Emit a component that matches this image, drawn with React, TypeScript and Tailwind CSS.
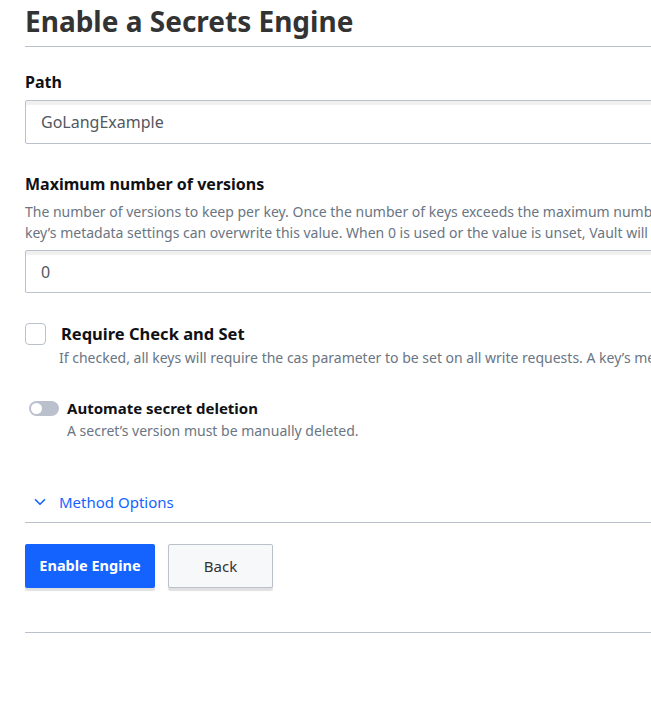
import { ChevronDown } from 'lucide-react';

const font = { fontFamily: '"Noto Sans", "Open Sans", sans-serif' };

export default function App() {
  return (
    <div className="w-screen h-screen overflow-hidden bg-white" style={font}>
      <div className="w-[1000px] pl-[25px]">
        <h1 className="text-[28px] font-bold text-[#333333] leading-[34px] pt-[4px] pb-[8px] border-b border-[#bac1cc]">
          Enable a Secrets Engine
        </h1>

        {/* Path */}
        <div className="mt-[24px]">
          <label className="block text-[16px] font-bold text-[#0f1115] leading-[22px]">Path</label>
          <input
            readOnly
            value="GoLangExample"
            className="mt-[7px] w-full h-[44px] px-[15px] text-[16px] text-[#525761] border border-[#bac1cc] rounded-[2px] shadow-[inset_0_4px_1px_rgba(0,0,0,0.06)] outline-none"
          />
        </div>

        {/* Max versions */}
        <div className="mt-[29px]">
          <label className="block text-[16px] font-bold text-[#0f1115] leading-[22px]">Maximum number of versions</label>
          <p className="mt-[6px] text-[14px] leading-[21px] text-[#6a7583] whitespace-nowrap">
            The number of versions to keep per key. Once the number of keys exceeds the maximum number set here, the oldest version will be permanently deleted. This value applies to all keys, but a
            <br />
            key&rsquo;s metadata settings can overwrite this value. When 0 is used or the value is unset, Vault will keep 10 versions.
          </p>
          <input
            readOnly
            value="0"
            className="mt-[7px] w-full h-[43px] px-[15px] text-[16px] text-[#525761] border border-[#bac1cc] rounded-[2px] shadow-[inset_0_4px_1px_rgba(0,0,0,0.06)] outline-none"
          />
        </div>

        {/* Check and set */}
        <div className="mt-[29px] flex items-start">
          <div className="w-[21px] h-[22px] mt-[1px] border border-[#bac1cc] rounded-[4px] bg-white shrink-0" />
          <div className="ml-[15px] -mt-[1px]">
            <div className="text-[16.5px] font-bold text-[#0f1115] leading-[26px]">Require Check and Set</div>
            <div className="-ml-[2px] mt-[1px] text-[14px] leading-[20px] text-[#6a7583] whitespace-nowrap">
              If checked, all keys will require the cas parameter to be set on all write requests. A key&rsquo;s metadata settings can overwrite this value.
            </div>
          </div>
        </div>

        {/* Automate deletion */}
        <div className="mt-[30px] flex items-start">
          <div className="ml-[4px] mt-[3px] w-[30px] h-[15px] rounded-full bg-[#bac1cc] relative shrink-0">
            <div className="absolute left-[2px] top-[2px] w-[11px] h-[11px] rounded-full bg-white" />
          </div>
          <div className="ml-[8px]">
            <div className="text-[15px] font-bold text-[#0f1115] leading-[20px]">Automate secret deletion</div>
            <div className="mt-[3px] text-[14px] leading-[20px] text-[#6a7583]">A secret&rsquo;s version must be manually deleted.</div>
          </div>
        </div>

        {/* Method options */}
        <div className="mt-[51px] pb-[10px] border-b border-[#bac1cc] flex items-center">
          <ChevronDown className="ml-[6px] w-[18px] h-[18px] text-[#1563ff]" strokeWidth={2.2} />
          <span className="ml-[10px] text-[15px] text-[#1563ff] leading-[20px]">Method Options</span>
        </div>

        {/* Buttons */}
        <div className="mt-[21px] flex gap-[13px]">
          <button className="w-[130px] h-[44px] bg-[#1563ff] text-white text-[14.5px] font-bold rounded-[2px] shadow-[0_3px_1px_rgba(0,0,0,0.12)]">
            Enable Engine
          </button>
          <button className="w-[105px] h-[44px] bg-[#f7f8fa] text-[#333333] text-[15px] border border-[#bac1cc] rounded-[2px] shadow-[0_3px_1px_rgba(0,0,0,0.12)]">
            Back
          </button>
        </div>

        <div className="mt-[44px] border-b border-[#bac1cc]" />
      </div>
    </div>
  );
}
